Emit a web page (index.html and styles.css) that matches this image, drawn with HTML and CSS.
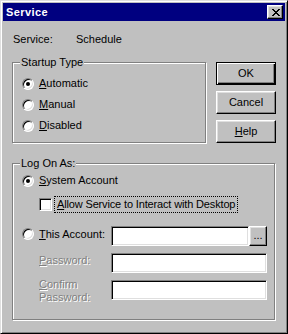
FILE: index.html
```html
<!DOCTYPE html>
<html lang="en">
<head>
    <meta charset="UTF-8">
    <title>Service</title>
    <link rel="stylesheet" href="styles.css">
</head>
<body>
    <div class="window">
        <div class="titlebar">
            <span class="title">Service</span>
            <button class="close-btn">
                <svg width="8" height="7" viewBox="0 0 8 7" shape-rendering="crispEdges">
                    <path d="M0 0h2v1h-2zM6 0h2v1h-2zM1 1h2v1h-2zM5 1h2v1h-2zM2 2h4v1h-4zM3 3h2v1h-2zM2 4h4v1h-4zM1 5h2v1h-2zM5 5h2v1h-2zM0 6h2v1h-2zM6 6h2v1h-2z" fill="#000"/>
                </svg>
            </button>
        </div>

        <div class="content">
            <div class="service-row">
                <span class="service-label">Service:</span>
                <span>Schedule</span>
            </div>

            <div class="top-row">
                <div class="group startup">
                    <div class="group-title">Startup Type</div>
                    <div class="option">
                        <span class="radio checked"></span>
                        <span class="option-text"><u>A</u>utomatic</span>
                    </div>
                    <div class="option">
                        <span class="radio"></span>
                        <span class="option-text"><u>M</u>anual</span>
                    </div>
                    <div class="option">
                        <span class="radio"></span>
                        <span class="option-text"><u>D</u>isabled</span>
                    </div>
                </div>

                <div class="buttons">
                    <button class="btn btn-default">OK</button>
                    <button class="btn">Cancel</button>
                    <button class="btn"><u>H</u>elp</button>
                </div>
            </div>

            <div class="group logon">
                <div class="group-title">Log On As:</div>
                <div class="option">
                    <span class="radio checked"></span>
                    <span class="option-text"><u>S</u>ystem Account</span>
                </div>
                <div class="check-row">
                    <span class="checkbox"></span>
                    <span class="check-text focused"><u>A</u>llow Service to Interact with Desktop</span>
                </div>
                <div class="account-row">
                    <span class="radio"></span>
                    <span class="field-label"><u>T</u>his Account:</span>
                    <span class="field account-field"></span>
                    <button class="btn btn-browse">...</button>
                </div>
                <div class="password-row">
                    <span class="field-label disabled"><u>P</u>assword:</span>
                    <span class="field password-field"></span>
                </div>
                <div class="confirm-row">
                    <span class="field-label disabled"><u>C</u>onfirm<br>Password:</span>
                    <span class="field password-field"></span>
                </div>
            </div>
        </div>
    </div>
</body>
</html>
```

FILE: styles.css
```css
* {
    box-sizing: border-box;
}

body {
    margin: 0;
    font-family: 'Liberation Sans', Arial, sans-serif;
    font-size: 11px;
    line-height: 13px;
    color: #000;
    background: #c0c0c0;
}

u {
    text-decoration: underline;
    text-underline-offset: 1px;
}

.window {
    width: 288px;
    height: 334px;
    padding: 2px;
    background: #c0c0c0;
    border: 1px solid;
    border-color: #dfdfdf #000 #000 #dfdfdf;
    box-shadow: inset 1px 1px #fff, inset -1px -1px #808080;
}

/* caption */
.titlebar {
    height: 18px;
    background: #000080;
    display: flex;
    align-items: center;
    justify-content: space-between;
    padding: 0 2px 0 3px;
}

.title {
    color: #fff;
    font-weight: bold;
    font-size: 11px;
    letter-spacing: 0.4px;
}

.close-btn {
    width: 16px;
    height: 14px;
    padding: 0 0 0 1px;
    display: flex;
    align-items: center;
    justify-content: center;
    background: #c0c0c0;
    border: 1px solid;
    border-color: #fff #000 #000 #fff;
    box-shadow: inset -1px -1px #808080, inset 1px 1px #dfdfdf;
}

.close-btn svg {
    display: block;
}

/* client area */
.content {
    padding: 12px 0 0 9px;
}

.service-row {
    display: flex;
    padding-left: 1px;
    margin-bottom: 16px;
}

.service-label {
    width: 63px;
}

.top-row {
    display: flex;
    align-items: flex-start;
}

.group {
    border: 1px solid #808080;
    box-shadow: inset 1px 1px #fff, 1px 1px #fff;
}

.group-title {
    display: table;
    margin: -7px 0 0 7px;
    padding: 0 1px;
    background: #c0c0c0;
}

.startup {
    width: 194px;
    padding-bottom: 5px;
}

.startup .group-title {
    margin-bottom: 5px;
}

.option {
    display: flex;
    align-items: flex-start;
    height: 21px;
    padding-left: 9px;
}

.option .radio {
    margin-top: 4px;
}

.option-text {
    margin: 3px 0 0 5px;
}

.radio {
    width: 12px;
    height: 12px;
    flex: none;
    border-radius: 50%;
    background: #fff;
    border: 1px solid;
    border-color: #808080 #fff #fff #808080;
    box-shadow: inset 1px 1px #000, inset -1px -1px #dfdfdf;
    display: flex;
    align-items: center;
    justify-content: center;
}

.radio.checked::after {
    content: '';
    width: 4px;
    height: 4px;
    border-radius: 50%;
    background: #000;
}

.checkbox {
    width: 13px;
    height: 13px;
    flex: none;
    background: #fff;
    border: 1px solid;
    border-color: #808080 #fff #fff #808080;
    box-shadow: inset 1px 1px #000, inset -1px -1px #dfdfdf;
}

/* buttons */
.buttons {
    display: flex;
    flex-direction: column;
    gap: 6px;
    margin-left: 10px;
}

.btn {
    width: 60px;
    height: 23px;
    padding: 0;
    font-family: inherit;
    font-size: 11px;
    line-height: 13px;
    color: #000;
    background: #c0c0c0;
    border: 1px solid;
    border-color: #fff #000 #000 #fff;
    box-shadow: inset -1px -1px #808080, inset 1px 1px #dfdfdf;
}

.btn-default {
    border-color: #000;
    box-shadow: inset 1px 1px #fff, inset -1px -1px #000, inset -2px -2px #808080;
}

.btn-browse {
    width: 18px;
    height: 20px;
    padding-bottom: 2px;
    flex: none;
}

/* log on group */
.logon {
    width: 263px;
    margin-top: 20px;
    padding-bottom: 15px;
}

.logon .group-title {
    margin-bottom: 1px;
}

.check-row {
    display: flex;
    align-items: flex-start;
    margin-top: 4px;
    padding-left: 26px;
}

.check-row .checkbox {
    margin-top: 2px;
}

.check-text {
    margin-left: 2px;
    padding: 1px 2px 1px 2px;
    border: 1px dotted transparent;
    letter-spacing: -0.15px;
}

.check-text.focused {
    border-color: #000;
}

.account-row {
    display: flex;
    align-items: flex-start;
    margin-top: 13px;
    padding-left: 9px;
}

.account-row .radio {
    margin-top: 2px;
}

.account-row .field-label {
    margin: 2px 0 0 5px;
}

.field-label {
    width: 72px;
    flex: none;
}

.field-label.disabled {
    color: #808080;
    text-shadow: 1px 1px #fff;
}

.field {
    height: 20px;
    background: #fff;
    border: 1px solid;
    border-color: #808080 #fff #fff #808080;
    box-shadow: inset 1px 1px #000, inset -1px -1px #dfdfdf;
}

.account-field {
    width: 138px;
}

.password-field {
    width: 156px;
}

.password-row {
    display: flex;
    align-items: flex-start;
    margin-top: 7px;
    padding-left: 26px;
}

.password-row .field-label {
    margin-top: 1px;
}

.confirm-row {
    display: flex;
    align-items: flex-start;
    margin-top: 5px;
    padding-left: 26px;
}

.confirm-row .field {
    margin-top: 2px;
}
```
